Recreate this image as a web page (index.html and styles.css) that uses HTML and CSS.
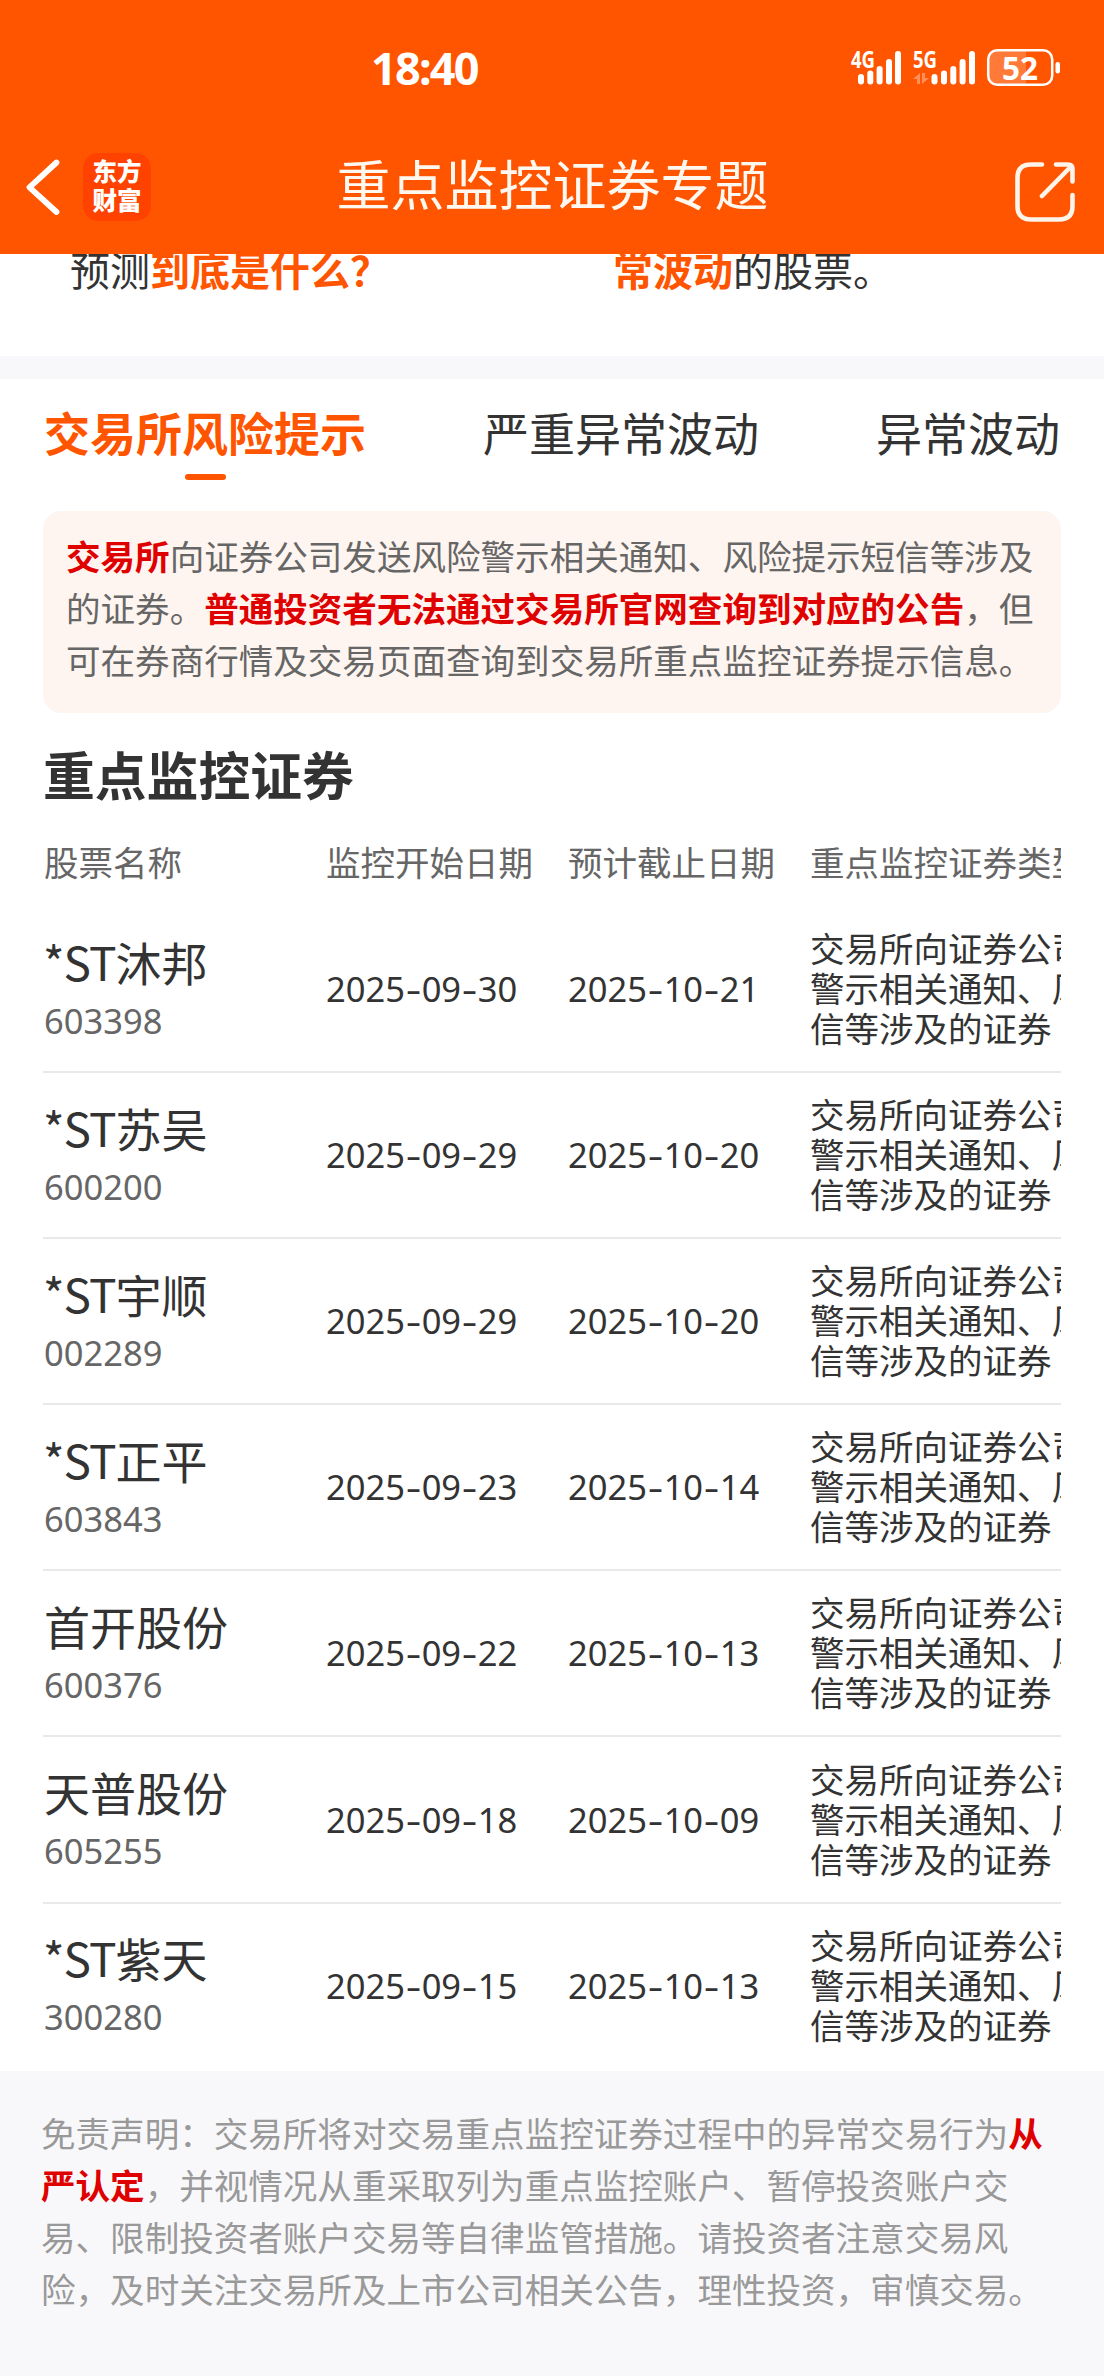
FILE: index.html
```html
<!DOCTYPE html>
<html lang="zh-CN">
<head>
<meta charset="utf-8">
<title>重点监控证券专题</title>
<link rel="stylesheet" href="styles.css">
</head>
<body>
<header class="header">
  <div class="status">
    <div class="clock">18:40</div>
    <svg class="status-icons" width="212" height="40" viewBox="850 48 212 40" fill="#fff">
      <text class="net" x="851" y="68" textLength="24" lengthAdjust="spacingAndGlyphs">4G</text>
      <rect x="858" y="74" width="6" height="10.500" rx="3"/>
      <rect x="867.300" y="70.500" width="6" height="14" rx="3"/>
      <rect x="876.600" y="66" width="6" height="18.500" rx="3"/>
      <rect x="886" y="59" width="6" height="25.500" rx="3"/>
      <rect x="895" y="51" width="6" height="33.500" rx="3"/>
      <text class="net" x="913" y="68" textLength="24" lengthAdjust="spacingAndGlyphs">5G</text>
      <path opacity=".35" d="M917 84v-5h-4l7-6v11zM922 73v11l7-6h-4v-5z"/>
      <rect x="931.500" y="74" width="6" height="10.500" rx="3"/>
      <rect x="941" y="70.500" width="6" height="14" rx="3"/>
      <rect x="950.300" y="66" width="6" height="18.500" rx="3"/>
      <rect x="959.600" y="59" width="6" height="25.500" rx="3"/>
      <rect x="969" y="51" width="6" height="33.500" rx="3"/>
      <path opacity=".22" d="M997 51h29v34h-29q-8 0-8-8v-18q0-8 8-8z"/>
      <rect x="988.200" y="50.200" width="64" height="34.600" rx="9" fill="none" stroke="#fff" stroke-width="2.500"/>
      <rect x="1055.500" y="62" width="4.500" height="11.500" rx="2.200"/>
      <text class="charge" x="1002" y="79.500" textLength="36" lengthAdjust="spacingAndGlyphs">52</text>
    </svg>
  </div>
  <div class="nav">
    <div class="nav-side">
      <svg width="40" height="60" viewBox="22 157 40 60"><path d="M56.500 162.500L29.500 187.300L56.500 212" fill="none" stroke="#fff" stroke-width="5.800" stroke-linecap="round" stroke-linejoin="round"/></svg>
      <div class="logo">东方<br>财富</div>
    </div>
    <h1 class="title">重点监控证券专题</h1>
    <div class="nav-side nav-right">
      <svg width="62" height="62" viewBox="1013 161 62 62" fill="none" stroke="#fff4ea" stroke-width="4.600" stroke-linecap="round" stroke-linejoin="round"><path d="M1041 164.500h-11q-13.500 0-13.500 13.500v28q0 13.500 13.500 13.500h28q13.500 0 13.500-13.500v-11M1055 164.500h12q4.500 0 4.500 4.500v12.500M1070 166.500L1041 196"/></svg>
    </div>
  </div>
</header>
<section class="peek">
  <p>预测<b>到底是什么？</b></p>
  <p><b>常波动</b>的股票。</p>
</section>
<main class="main">
  <nav class="tabs">
    <div class="tab active">交易所风险提示</div>
    <div class="tab">严重异常波动</div>
    <div class="tab">异常波动</div>
  </nav>
  <div class="notice"><b>交易所</b>向证券公司发送风险警示相关通知、风险提示短信等涉及<br>的证券。<b>普通投资者无法通过交易所官网查询到对应的公告</b>，但<br>可在券商行情及交易页面查询到交易所重点监控证券提示信息。</div>
  <h2 class="heading">重点监控证券</h2>
  <div class="table">
    <div class="row head"><div>股票名称</div><div>监控开始日期</div><div>预计截止日期</div><div>重点监控证券类型</div></div>
    <div class="row"><div><div class="name"><span class="st">*ST</span>沐邦</div><div class="code">603398</div></div><div>2025<span class="dash">-</span>09<span class="dash">-</span>30</div><div>2025<span class="dash">-</span>10<span class="dash">-</span>21</div><div class="type">交易所向证券公司发送风险<br>警示相关通知、风险提示短<br>信等涉及的证券</div></div>
    <div class="row"><div><div class="name"><span class="st">*ST</span>苏吴</div><div class="code">600200</div></div><div>2025<span class="dash">-</span>09<span class="dash">-</span>29</div><div>2025<span class="dash">-</span>10<span class="dash">-</span>20</div><div class="type">交易所向证券公司发送风险<br>警示相关通知、风险提示短<br>信等涉及的证券</div></div>
    <div class="row"><div><div class="name"><span class="st">*ST</span>宇顺</div><div class="code">002289</div></div><div>2025<span class="dash">-</span>09<span class="dash">-</span>29</div><div>2025<span class="dash">-</span>10<span class="dash">-</span>20</div><div class="type">交易所向证券公司发送风险<br>警示相关通知、风险提示短<br>信等涉及的证券</div></div>
    <div class="row"><div><div class="name"><span class="st">*ST</span>正平</div><div class="code">603843</div></div><div>2025<span class="dash">-</span>09<span class="dash">-</span>23</div><div>2025<span class="dash">-</span>10<span class="dash">-</span>14</div><div class="type">交易所向证券公司发送风险<br>警示相关通知、风险提示短<br>信等涉及的证券</div></div>
    <div class="row"><div><div class="name">首开股份</div><div class="code">600376</div></div><div>2025<span class="dash">-</span>09<span class="dash">-</span>22</div><div>2025<span class="dash">-</span>10<span class="dash">-</span>13</div><div class="type">交易所向证券公司发送风险<br>警示相关通知、风险提示短<br>信等涉及的证券</div></div>
    <div class="row"><div><div class="name">天普股份</div><div class="code">605255</div></div><div>2025<span class="dash">-</span>09<span class="dash">-</span>18</div><div>2025<span class="dash">-</span>10<span class="dash">-</span>09</div><div class="type">交易所向证券公司发送风险<br>警示相关通知、风险提示短<br>信等涉及的证券</div></div>
    <div class="row"><div><div class="name"><span class="st">*ST</span>紫天</div><div class="code">300280</div></div><div>2025<span class="dash">-</span>09<span class="dash">-</span>15</div><div>2025<span class="dash">-</span>10<span class="dash">-</span>13</div><div class="type">交易所向证券公司发送风险<br>警示相关通知、风险提示短<br>信等涉及的证券</div></div>
  </div>
</main>
<footer class="footer">免责声明：交易所将对交易重点监控证券过程中的异常交易行为<b>从<br>严认定</b>，并视情况从重采取列为重点监控账户、暂停投资账户交<br>易、限制投资者账户交易等自律监管措施。请投资者注意交易风<br>险，及时关注交易所及上市公司相关公告，理性投资，审慎交易。</footer>
</body>
</html>
```
FILE: styles.css
```css
* { box-sizing: border-box; margin: 0; padding: 0; }
body {
  width: 1104px;
  height: 2376px;
  overflow: hidden;
  display: flex;
  flex-direction: column;
  background: #fff;
  color: #333;
  font-family: "Noto Sans", "Noto Sans CJK SC", sans-serif;
  font-size: 34.5px;
  white-space: nowrap;
}
.header, .peek, .main { flex-shrink: 0; }

.header { height: 254px; background: #ff5500; color: #fff; }
.status {
  height: 136px;
  display: flex;
  justify-content: space-between;
  padding: 0 42px 0 371px;
}
.clock {
  height: 136px;
  line-height: 136px;
  font-size: 45px;
  font-weight: 700;
  letter-spacing: -1.8px;
}
.status-icons { margin-top: 48px; }
.net { font: 700 23px "Noto Sans", sans-serif; }
.charge { font: 700 33px "Noto Sans", sans-serif; }
.nav {
  height: 102px;
  display: flex;
  align-items: center;
  justify-content: space-between;
  padding: 0 28px 0 22px;
}
.nav-side { width: 140px; display: flex; align-items: center; gap: 21px; }
.nav-right { justify-content: flex-end; width: 133px; padding-top: 9px; }
.logo {
  width: 68px;
  height: 68px;
  padding-top: 3px;
  border-radius: 15px;
  background: #ff4200;
  font: 900 24.5px/29px "Noto Sans CJK SC", sans-serif;
  text-align: center;
}
.title {
  padding-bottom: 9px;
  color: #fff8f0;
  font: 400 54px/80px "Noto Sans CJK SC", sans-serif;
}

.peek {
  height: 125px;
  display: flex;
  overflow: hidden;
  padding-left: 70px;
  border-bottom: 23px solid #f8f8fb;
  font: 400 40px/60px "Noto Sans CJK SC", sans-serif;
}
.peek p { flex: 0 0 543px; margin-top: -15px; }
.peek b { color: #ff5500; }

.main { height: 1692px; padding: 0 43px; }
.tabs {
  height: 132px;
  display: flex;
  justify-content: space-between;
  padding: 17px 1px 0;
  font: 400 46px/70px "Noto Sans CJK SC", sans-serif;
}
.tab.active { color: #ff5500; font-weight: 700; }
.tab.active::after {
  content: "";
  display: block;
  width: 41px;
  height: 6px;
  margin: 8px auto 0;
  border-radius: 3px;
  background: #ff5500;
}
.notice {
  height: 202px;
  padding: 18px 23px;
  border-radius: 18px;
  background: #fff5f0;
  color: #666;
  font: 400 34.56px/52px "Noto Sans CJK SC", sans-serif;
}
.notice b, .footer b { color: #df0000; }
.heading {
  height: 108px;
  padding: 21px 0 0;
  font: 700 51.8px/80px "Noto Sans CJK SC", sans-serif;
}
.row {
  height: 166.1px;
  display: grid;
  grid-template-columns: 282px 242px 242px 1fr;
  align-items: center;
  padding-left: 1px;
  overflow: hidden;
  border-bottom: 2px solid #e9e9e9;
}
.row:last-child { border-bottom: 0; padding-bottom: 2px; }
.row.head {
  height: 86px;
  align-items: start;
  border: 0;
  color: #666;
  font-family: "Noto Sans CJK SC", sans-serif;
}
.row.head div { line-height: 80px; }
.name { font: 400 46px/64px "Noto Sans CJK SC", sans-serif; }
.st { margin-left: -1px; letter-spacing: -1px; }
.code { color: #666; line-height: 56px; }
.row:not(.head) > div { padding-bottom: 1px; }
.dash { display: inline-block; margin: 0 2.8px; transform: scaleX(1.4); }
.row:not(.head) > .type { padding-bottom: 4px; font: 400 34.5px/40px "Noto Sans CJK SC", sans-serif; }

.footer {
  flex: 1;
  padding: 35px 41px;
  background: #f8f8fb;
  color: #999;
  font: 400 34.56px/52px "Noto Sans CJK SC", sans-serif;
}
```
